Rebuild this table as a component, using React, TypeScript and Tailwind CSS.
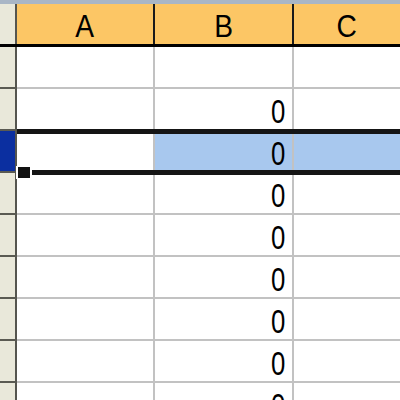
export default function App() {
  const rows = ["", "0", "0", "0", "0", "0", "0", "0", "0"]
  const cols = ["A", "B", "C"]

  return (
    <div className="relative w-[400px] h-[400px] overflow-hidden bg-white" style={{ fontFamily: '"Liberation Sans", Arial, sans-serif' }}>
      <div className="h-[4px] bg-[#a9b6c6]" />
      <div className="grid grid-cols-[17px_138px_139px_1fr] h-[43px] border-b-[3px] border-black">
        <div className="bg-[#e9e8da] border-r-2 border-[#55554f]" />
        {cols.map((c, i) => (
          <div
            key={c}
            className={`bg-[#fcc665] flex items-center justify-center pt-[3px] text-[32px] leading-none text-black ${i < 2 ? "border-r-2 border-[#1a1a1a]" : ""}`}
          >
            <span className="inline-block scale-x-[0.88]">{c}</span>
          </div>
        ))}
      </div>
      {rows.map((v, r) => (
        <div key={r} className="grid grid-cols-[17px_138px_139px_1fr] h-[42px]">
          <div
            className={`border-r-2 border-b-2 border-b-[#5a5a52] border-r-[#55554f] ${r === 2 ? "bg-[#0b2fa0]" : "bg-[#e9e8da]"}`}
          />
          <div className="bg-white border-r-2 border-b-2 border-[#c2c2c2]" />
          <div
            className={`border-r-2 border-b-2 border-[#c2c2c2] flex items-center justify-end pr-[7px] pt-[4px] text-[33px] leading-none text-black ${r === 2 ? "bg-[#a8c8ee]" : "bg-white"}`}
          >
            <span className="inline-block origin-right scale-x-[0.78]">{v}</span>
          </div>
          <div className={`border-b-2 border-[#c2c2c2] ${r === 2 ? "bg-[#a8c8ee]" : "bg-white"}`} />
        </div>
      ))}
      {/* row selection outline */}
      <div className="absolute left-[17px] right-0 top-[129px] h-[46px] border-y-[5px] border-[#151515]" />
      {/* fill handle */}
      <div className="absolute left-[16px] top-[166px] w-[16px] h-[13px] bg-white" />
      <div className="absolute left-[18px] top-[167px] w-[12px] h-[11px] bg-[#111]" />
    </div>
  )
}
